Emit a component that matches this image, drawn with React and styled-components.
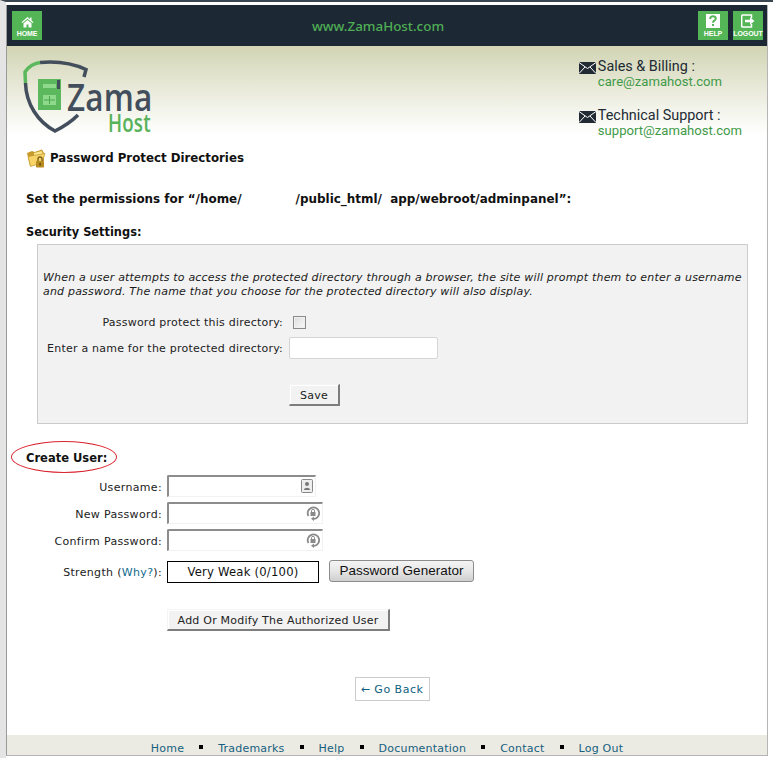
import React from 'react'
import styled, { createGlobalStyle } from 'styled-components'

const GlobalStyle = createGlobalStyle`
  html, body {
    margin: 0;
    padding: 0;
    height: 758px;
    overflow: hidden;
    background: #fff;
    font-family: "DejaVu Sans", Verdana, sans-serif;
    font-size: 11px;
    letter-spacing: 0.22px;
    color: #1a1a1a;
  }
`

const Page = styled.div`
  width: 773px;
  height: 758px;
  box-sizing: border-box;
  border-top: 2px solid #3c4650;
  border-left: 6px solid #e4e4e4;
  background: #fff;
  padding: 3px 5px 2px 0;
  overflow: hidden;
`
const Frame = styled.div`
  height: 751px;
  box-sizing: border-box;
  background: #fff;
  border-left: 1px solid #9a9a9a;
  border-right: 1px solid #b5b5b5;
  border-bottom: 1px solid #b5b5b5;
  display: flex;
  flex-direction: column;
`
const TopBar = styled.div`
  height: 41px;
  flex: none;
  background: #1c2833;
  display: flex;
  align-items: flex-start;
  padding: 6px 4px 0 5px;
  box-sizing: border-box;
  gap: 5px;
`
const SiteName = styled.div`
  flex: 1;
  text-align: center;
  font-family: "Noto Sans", sans-serif;
  font-size: 13.4px;
  font-weight: 500;
  letter-spacing: 0;
  line-height: 30px;
  color: #4fae55;
  padding-left: 16px;
`
const TileButton = styled.a`
  width: 30px;
  height: 29px;
  background: #54b556;
  color: #fff;
  font-family: "Liberation Sans", sans-serif;
  font-size: 7px;
  font-weight: bold;
  letter-spacing: -0.1px;
  display: flex;
  flex-direction: column;
  align-items: center;
  justify-content: flex-end;
  padding-bottom: 2px;
  box-sizing: border-box;
  line-height: 8px;
  svg { margin-bottom: 2px; }
`
const Hero = styled.div`
  height: 89px;
  flex: none;
  background: linear-gradient(#d2d4b4, #eff0e4 62%, #fff);
  display: flex;
  justify-content: space-between;
  padding: 11px 25px 0 15px;
  box-sizing: border-box;
`
const Contacts = styled.div`
  display: flex;
  flex-direction: column;
  gap: 18px;
  padding-top: 2px;
`
const Contact = styled.div`
  display: grid;
  grid-template-columns: 18px auto;
  column-gap: 2px;
  font-family: Roboto, sans-serif;
  font-size: 14.4px;
  letter-spacing: 0;
  line-height: 16px;
  color: #222b33;
  svg { margin: 3px 0 0 1px; }
`
const Mail = styled.span`
  grid-column: 2;
  margin-top: -1px;
  color: #3f9a48;
  font-size: 13.1px;
`
const Content = styled.div`
  flex: 1;
  padding: 13px 19px 0;
`
const Title = styled.h1`
  margin: 0 0 24px;
  display: flex;
  align-items: center;
  gap: 4px;
  font-size: 11.8px;
  letter-spacing: 0;
  font-weight: bold;
  line-height: 20px;
  color: #111;
`
const Section = styled.div`
  font-weight: bold;
  font-size: ${p => p.$size || 11.4}px;
  letter-spacing: 0;
  line-height: 14px;
  color: #111;
  margin-bottom: ${p => p.$gap}px;
  white-space: pre;
`
const Panel = styled.div`
  width: 711px;
  height: 180px;
  margin-left: 11px;
  box-sizing: border-box;
  background: #f2f2f2;
  border: 1px solid #cbcbcb;
  padding: 26px 5px 0;
`
const Note = styled.p`
  margin: 0 0 10px;
  font-style: italic;
  line-height: 14px;
  letter-spacing: 0.195px;
  color: #1a1a1a;
  white-space: nowrap;
`
const PanelRow = styled.div`
  display: grid;
  grid-template-columns: 242px auto;
  column-gap: 6px;
  align-items: center;
  height: 26px;
  margin-left: -2px;
`
const Label = styled.label`
  text-align: right;
  white-space: nowrap;
  color: #222;
`
const Check = styled.input.attrs({ type: 'checkbox' })`
  appearance: none;
  margin: 0 0 0 4px;
  width: 13px;
  height: 13px;
  box-sizing: border-box;
  border: 1px solid #8a8a8a;
  background: linear-gradient(135deg, #dcdcdc, #fafafa);
  box-shadow: inset 0 0 0 1px #f0f0f0;
`
const TextField = styled.input`
  width: 149px;
  height: 22px;
  box-sizing: border-box;
  background: #fff;
  border: 1px solid #d5d5d5;
  border-radius: 2px;
  padding: 0 3px;
  outline: none;
`
const FlatButton = styled.button`
  display: block;
  height: 22px;
  width: ${p => p.$w}px;
  padding: 2px 0 0;
  box-sizing: border-box;
  font-family: inherit;
  font-size: 11px;
  letter-spacing: 0.22px;
  color: #222;
  background: #f2f2f2;
  border: 1px solid #f4f4f4;
  border-right: 2px solid #7d7d7d;
  border-bottom: 2px solid #7d7d7d;
  box-shadow: inset 1px 1px 0 #fff;
`
const SaveSlot = styled.div`
  margin: 23px 0 0 246px;
`
const CreateHead = styled.div`
  position: relative;
  margin-top: 27px;
`
const Ellipse = styled.div`
  position: absolute;
  left: -15px;
  top: -10px;
  width: 106px;
  height: 32px;
  box-sizing: border-box;
  border: 1px solid #d9232e;
  border-radius: 50%;
`
const UserForm = styled.div`
  display: grid;
  grid-template-columns: 136px auto;
  column-gap: 5px;
  row-gap: 5px;
  align-items: center;
  margin-top: 10px;
  justify-items: start;
  > label {
    justify-self: end;
    margin-top: 2px;
    letter-spacing: 0.33px;
  }
`
const InsetWrap = styled.div`
  position: relative;
  width: ${p => p.$w}px;
  height: 22px;
  svg { position: absolute; right: 3px; top: 4px; }
`
const InsetField = styled.input`
  width: 100%;
  height: 100%;
  box-sizing: border-box;
  padding: 0 20px 0 3px;
  background: #fff;
  outline: none;
  border: 1px solid #f2f2f2;
  border-top: 2px solid #8c8c8c;
  border-left: 2px solid #8c8c8c;
  border-radius: 2px 0 0 0;
`
const Why = styled.a`
  color: #0f6c8c;
`
const StrengthLabel = styled(Label)`
  && { margin-top: 5px; }
`
const StrengthRow = styled.div`
  display: flex;
  align-items: center;
  gap: 10px;
  margin-top: 5px;
`
const Meter = styled.div`
  width: 152px;
  height: 22px;
  box-sizing: border-box;
  border: 1px solid #000;
  background: #fff;
  text-align: center;
  font-size: 11.6px;
  line-height: 21px;
  color: #111;
`
const GenButton = styled.button`
  width: 145px;
  height: 22px;
  margin-top: -2px;
  padding: 0 0 2px;
  font-family: "Liberation Sans", sans-serif;
  font-size: 13.5px;
  letter-spacing: 0;
  color: #111;
  background: linear-gradient(#f4f4f4, #e6e6e6 50%, #cfcfcf);
  border: 1px solid #8c8c8c;
  border-radius: 3px;
`
const AddSlot = styled.div`
  margin: 26px 0 0 141px;
`
const BackRow = styled.div`
  display: flex;
  justify-content: center;
  margin-top: 46px;
  padding-left: 10px;
`
const BackLink = styled.a`
  width: 75px;
  height: 24px;
  box-sizing: border-box;
  border: 1px solid #ccc;
  text-align: center;
  line-height: 24px;
  letter-spacing: 0.5px;
  color: #0f5f80;
`
const Footer = styled.div`
  flex: none;
  height: 20px;
  background: #ecebe3;
  display: flex;
  justify-content: center;
  align-items: flex-start;
  padding-top: 7px;
  box-sizing: border-box;
  gap: 15px;
  line-height: 14px;
`
const FootLink = styled.a`
  color: #15607f;
`
const Dot = styled.i`
  width: 4px;
  height: 4px;
  background: #000;
  margin-top: 3px;
`

const HomeIcon = () => (
  <svg width="13" height="12" viewBox="0 0 13 12"><path fill="#fff" d="M6.500 1 0.500 6.200l1 .9 5-4.300 5 4.300 1-.9L10.500 4.500V1.500H9V3.200zM2.500 7.300V11.500H5.500V8.500H7.500V11.500H10.500V7.300L6.500 3.900z" /></svg>
)
const HelpIcon = () => (
  <svg width="14" height="14" viewBox="0 0 14 14"><rect width="14" height="14" fill="#fff" /><path fill="none" stroke="#54b556" strokeWidth="2" d="M4.200 5c0-4 5.800-3.400 5.600-.3C9.700 6.600 7 6.300 7 8.700" /><rect x="6" y="10" width="2" height="2" fill="#54b556" /></svg>
)
const LogoutIcon = () => (
  <svg width="14" height="14" viewBox="0 0 14 14"><path fill="none" stroke="#fff" strokeWidth="1.500" d="M10.500 4V1H1.500a.8.800 0 0 0-.8.800V12.200a.8.800 0 0 0 .8.800H10.500V10" /><path fill="#fff" d="M4 5.800H9V3.200L13.500 7 9 10.800V8.200H4z" /></svg>
)
const EnvelopeIcon = () => (
  <svg width="17" height="12" viewBox="0 0 17 12"><rect width="17" height="12" fill="#222b33" /><path fill="none" stroke="#fff" d="M0 0.500 8.500 6.500 17 0.500M0 11.500 6 5M17 11.500 11 5" /></svg>
)
const Logo = () => (
  <svg width="131" height="84" viewBox="22 57 131 84">
    <path fill="none" stroke="#434e5c" strokeWidth="3.500" d="M40 62.500C56 61 72 63 86 69.500L84 77" />
    <path fill="none" stroke="#5cb85c" strokeWidth="3.500" d="M25.500 83L25 72C29 66 33 63.500 40 62.500" />
    <path fill="none" stroke="#434e5c" strokeWidth="3.500" d="M25.500 83C26 104 38 122 55 131C63 127 71 122 78 115" />
    <rect x="38" y="79" width="23" height="31" fill="#5cb85c" />
    <path fill="#8ed98c" d="M43 84H56V88H43zM43 95H56V105H43z" />
    <path fill="none" stroke="#4aa64c" strokeWidth="1" d="M44 100H55M49.500 96V104" />
    <rect x="57" y="80" width="3" height="9" fill="#434e5c" />
    <text transform="translate(67 111) scale(.83 1)" fontFamily="Open Sans, sans-serif" fontSize="38" fontWeight="600" fill="#434e5c">Zama</text>
    <text transform="translate(108 132) scale(.75 1)" fontFamily="Open Sans, sans-serif" fontSize="25" fontWeight="600" fill="#57b25a">Host</text>
  </svg>
)
const FolderIcon = () => (
  <svg width="20" height="20" viewBox="0 0 20 20">
    <path fill="#c79a2a" d="M1 5 6 3l2.500 1L16 1.500 18 5v8L4 18z" />
    <path fill="#fbe58a" d="M8 5 15.500 3 17 6 8 8z" />
    <path fill="#f7d465" stroke="#c2952f" strokeWidth=".7" d="M2 8.500 19 5.500 16 15 4.500 18.500z" />
    <rect x="10" y="13" width="8" height="6.500" rx=".8" fill="#b98a1e" />
    <path fill="none" stroke="#7c6120" strokeWidth="1.400" d="M12 13v-2a2 2 0 0 1 4 0v2" />
    <rect x="13.400" y="15" width="1.400" height="2.500" fill="#5c4712" />
  </svg>
)
const CardIcon = () => (
  <svg width="12" height="14" viewBox="0 0 12 14"><rect x=".5" y=".5" width="11" height="13" rx="1" fill="#eee" stroke="#888" /><circle cx="6" cy="5" r="2" fill="#777" /><path fill="#777" d="M3 11c0-3 6-3 6 0z" /></svg>
)
const KeyIcon = () => (
  <svg width="14" height="15" viewBox="0 0 14 15"><path fill="none" stroke="#8a8a8a" strokeWidth="1.800" d="M2.500 10A5.700 5.700 0 1 1 8 12.800" /><path fill="#8a8a8a" d="M8 10.500v4.500l-3-2.200z" /><rect x="4.500" y="6" width="5" height="4" fill="#8a8a8a" /><path fill="none" stroke="#8a8a8a" d="M5.500 6V4.800a1.500 1.500 0 0 1 3 0V6" /></svg>
)

const footerLinks = ['Home', 'Trademarks', 'Help', 'Documentation', 'Contact', 'Log Out']

export default function App() {
  return (
    <>
      <GlobalStyle />
      <Page>
        <Frame>
          <TopBar>
            <TileButton><HomeIcon />HOME</TileButton>
            <SiteName>www.ZamaHost.com</SiteName>
            <TileButton><HelpIcon />HELP</TileButton>
            <TileButton><LogoutIcon />LOGOUT</TileButton>
          </TopBar>
          <Hero>
            <Logo />
            <Contacts>
              <Contact>
                <EnvelopeIcon />
                <span>Sales &amp; Billing :</span>
                <Mail>care@zamahost.com</Mail>
              </Contact>
              <Contact>
                <EnvelopeIcon />
                <span>Technical Support :</span>
                <Mail>support@zamahost.com</Mail>
              </Contact>
            </Contacts>
          </Hero>
          <Content>
            <Title><FolderIcon />Password Protect Directories</Title>
            <Section $gap={19} $size={11.95}>Set the permissions for “/home/             /public_html/  app/webroot/adminpanel”:</Section>
            <Section $gap={5}>Security Settings:</Section>
            <Panel>
              <Note>
                When a user attempts to access the protected directory through a browser, the site will prompt them to enter a username<br />
                and password. The name that you choose for the protected directory will also display.
              </Note>
              <PanelRow>
                <Label>Password protect this directory:</Label>
                <Check />
              </PanelRow>
              <PanelRow>
                <Label>Enter a name for the protected directory:</Label>
                <TextField />
              </PanelRow>
              <SaveSlot><FlatButton $w={51}>Save</FlatButton></SaveSlot>
            </Panel>
            <CreateHead>
              <Section $gap={0} $size={11.5}>Create User:</Section>
              <Ellipse />
            </CreateHead>
            <UserForm>
              <Label>Username:</Label>
              <InsetWrap $w={149}><InsetField /><CardIcon /></InsetWrap>
              <Label>New Password:</Label>
              <InsetWrap $w={156}><InsetField type="password" /><KeyIcon /></InsetWrap>
              <Label>Confirm Password:</Label>
              <InsetWrap $w={156}><InsetField type="password" /><KeyIcon /></InsetWrap>
              <StrengthLabel>Strength (<Why>Why?</Why>):</StrengthLabel>
              <StrengthRow>
                <Meter>Very Weak (0/100)</Meter>
                <GenButton>Password Generator</GenButton>
              </StrengthRow>
            </UserForm>
            <AddSlot><FlatButton $w={223}>Add Or Modify The Authorized User</FlatButton></AddSlot>
            <BackRow><BackLink>← Go Back</BackLink></BackRow>
          </Content>
          <Footer>
            {footerLinks.map((l, i) => (
              <React.Fragment key={l}>
                {i > 0 && <Dot />}
                <FootLink>{l}</FootLink>
              </React.Fragment>
            ))}
          </Footer>
        </Frame>
      </Page>
    </>
  )
}
